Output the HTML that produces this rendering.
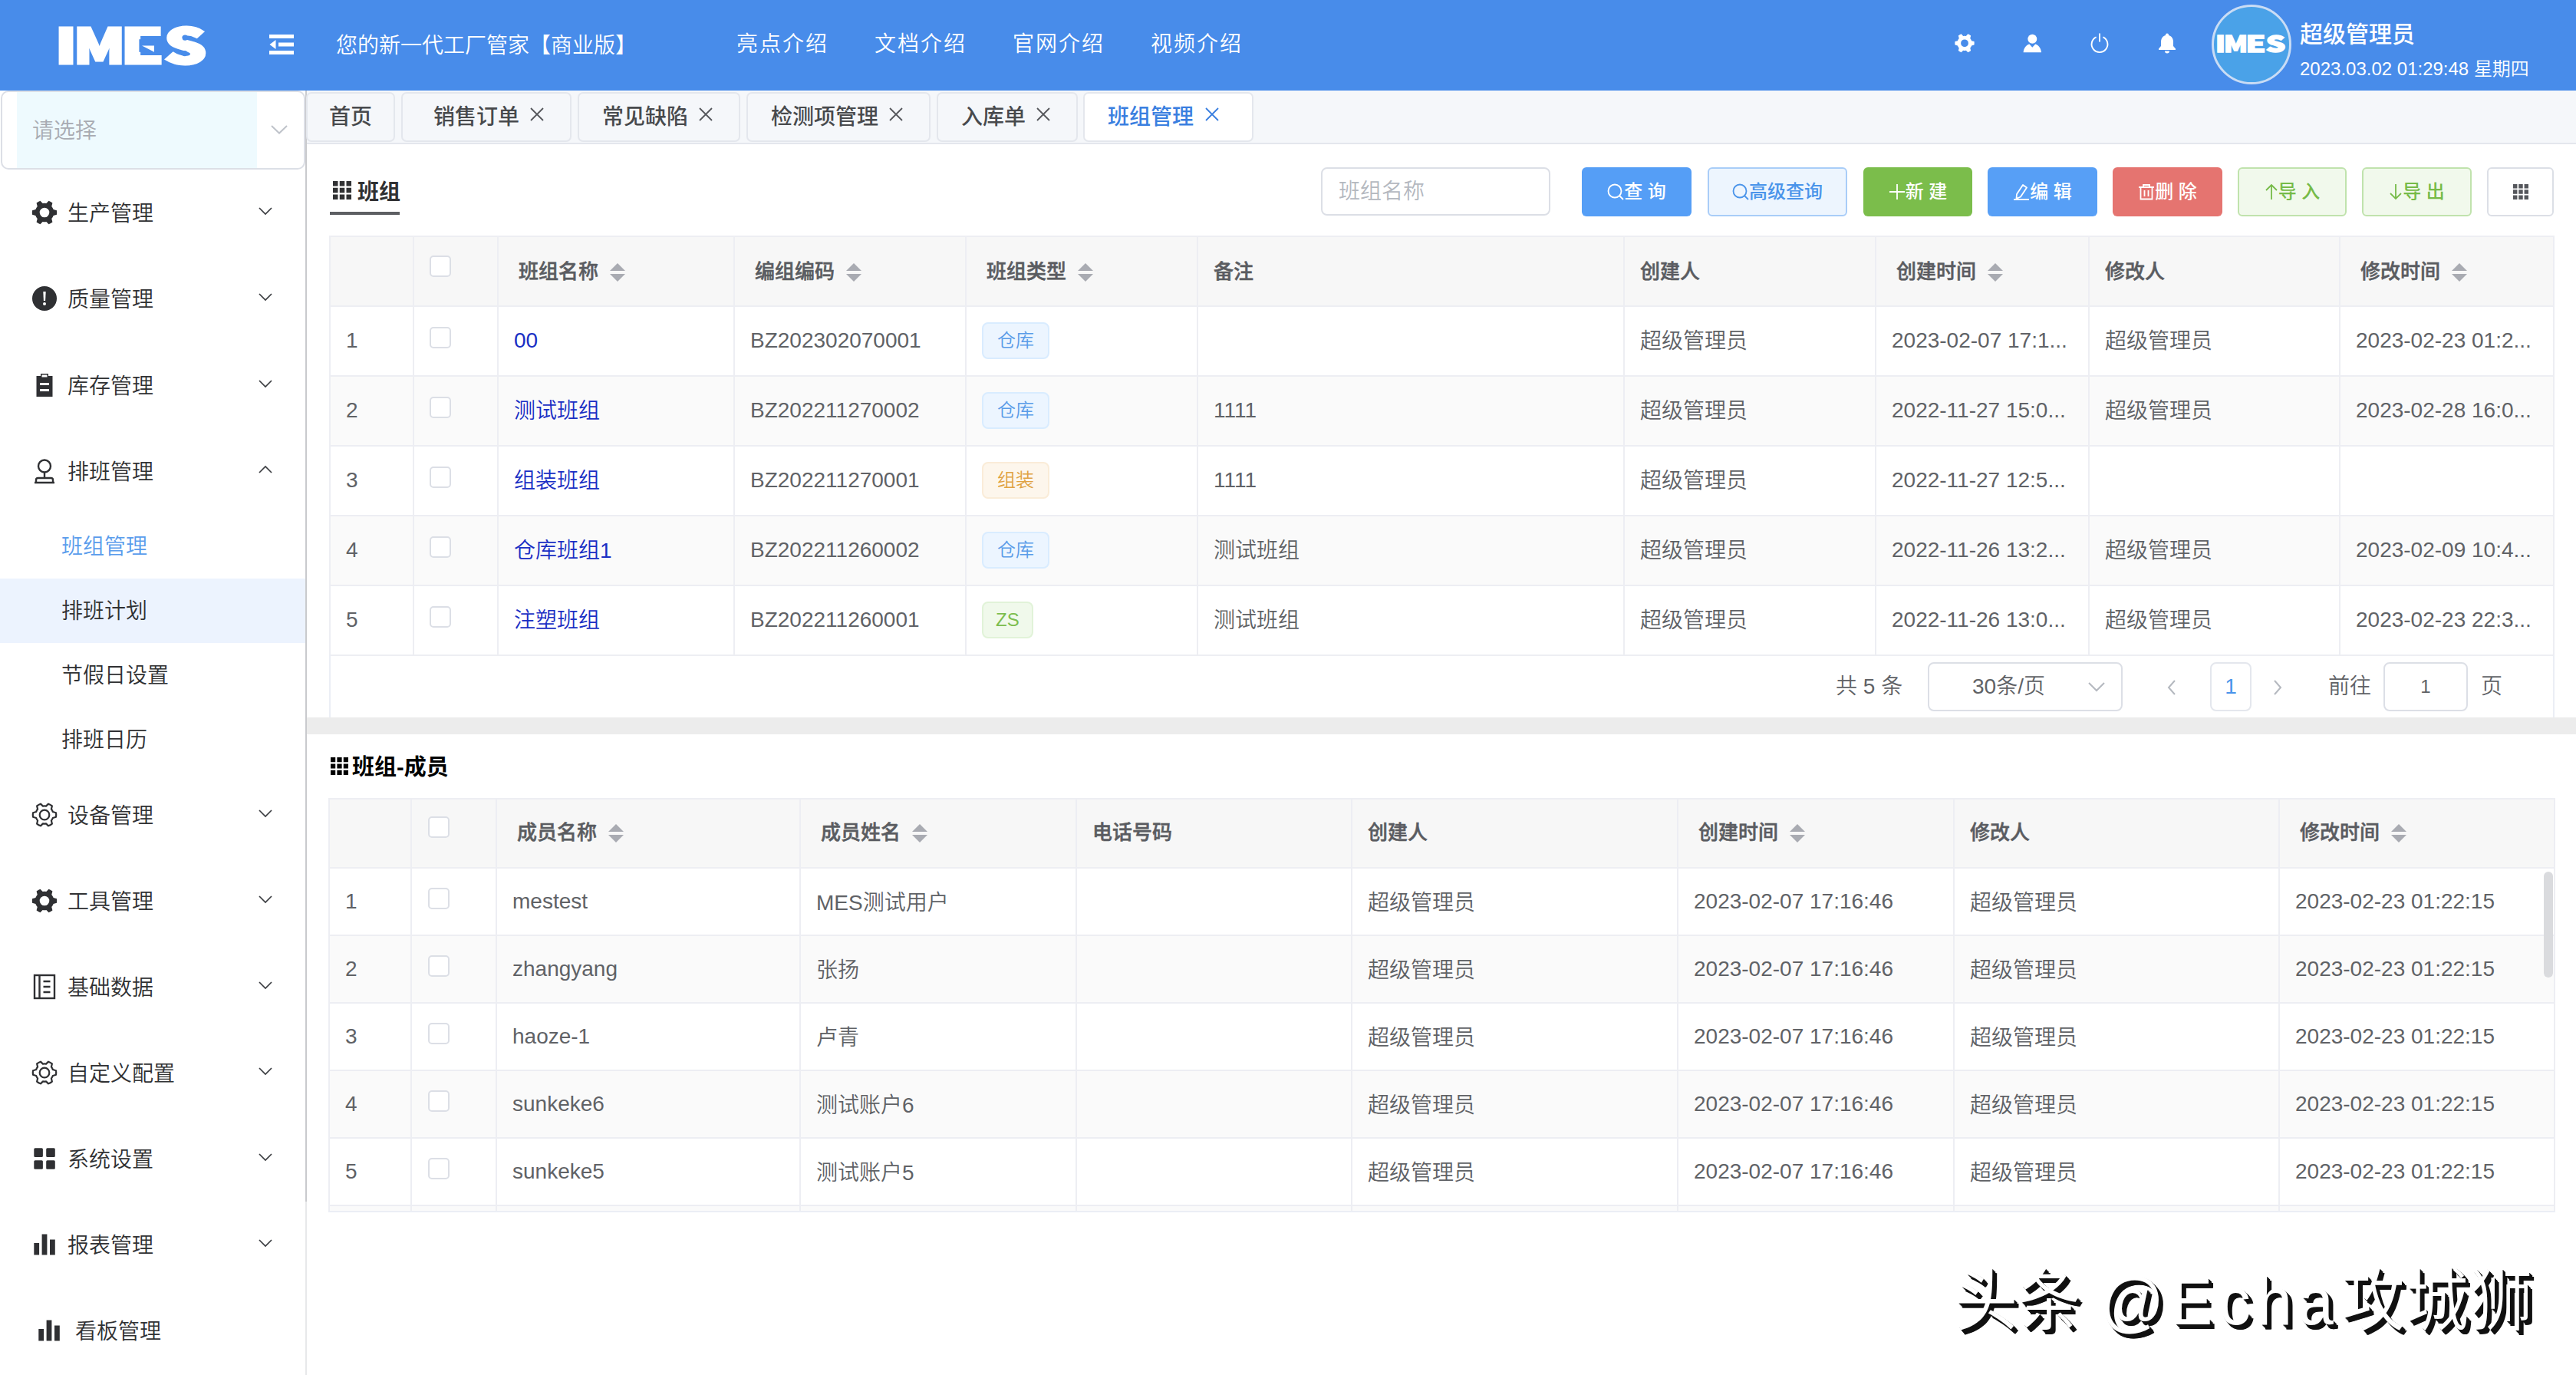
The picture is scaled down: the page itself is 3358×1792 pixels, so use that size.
<!DOCTYPE html>
<html lang="zh-CN">
<head>
<meta charset="utf-8">
<title>IMES 班组管理</title>
<style>
*{box-sizing:border-box;margin:0;padding:0}
html,body{width:3358px;height:1792px;overflow:hidden;background:#fff}
body{font-family:"Liberation Sans","Noto Sans CJK SC",sans-serif;font-size:28px;font-weight:350;color:#606266;position:relative}
.abs{position:absolute}
/* header */
#hdr{position:absolute;left:0;top:0;width:3358px;height:118px;background:#488cea;color:#fff}
#hdr .t{position:absolute;white-space:nowrap;line-height:40px;height:40px}
/* sidebar */
#side{position:absolute;left:0;top:118px;width:398px;height:1674px;background:#fff}
#sel{position:absolute;left:1px;top:0;width:397px;height:103px;border:2px solid #dcdfe6;border-radius:10px;background:#fff}
#sel .in{position:absolute;left:19px;top:0;width:313px;height:99px;background:#eefafe}
#sel .ph{position:absolute;left:39px;top:31px;line-height:40px;color:#a8abb2;font-size:28px}
.mi{position:absolute;left:0;width:398px;height:112px;line-height:112px;color:#303133;font-size:28px}
.mi .tx{position:absolute;left:88px;top:2px}
.mi svg.ic{position:absolute;left:41px;top:39px;width:34px;height:34px}
.mi svg.ar{position:absolute;left:336px;top:47px;width:20px;height:14px}
.si{position:absolute;left:0;width:398px;height:84px;line-height:84px;color:#303133;font-size:28px;padding-left:80px;padding-top:1px}
#sbar{position:absolute;left:398px;top:118px;width:2px;height:1674px;background:linear-gradient(#c9cacd 0,#c9cacd 1448px,#e7e8ea 1448px,#e7e8ea 100%)}
/* tabs */
#tabs{position:absolute;left:400px;top:118px;width:2958px;height:70px;background:#f5f7fa;border-bottom:2px solid #e4e7ed}
.tab{position:absolute;top:2px;height:65px;border:2px solid #e4e7ed;border-radius:7px;background:#f5f7fa;color:#484a4d;font-size:28px;font-weight:500;line-height:61px;white-space:nowrap}
.tab .x{position:absolute;top:17px;width:20px;height:20px}
.tab.on{background:#fff;color:#3a7fe0}
/* main */
#main{position:absolute;left:400px;top:188px;width:2958px;height:1604px;background:#fff}
.btn{position:absolute;top:30px;height:64px;border-radius:6px;font-size:24px;font-weight:500;line-height:64px;text-align:center;color:#fff;white-space:nowrap}
table{position:absolute;border-collapse:collapse;table-layout:fixed}
td,th{border:2px solid #edeef3;text-align:left;font-weight:350;padding:0 0 2px 20px;white-space:nowrap;overflow:hidden;vertical-align:middle}
th{background:#f7f7f7;color:#5a5c61;font-weight:500;font-size:26px;padding-bottom:4px;-webkit-text-stroke:.5px #5a5c61}
td.c{padding-bottom:5px}
th.s{padding-left:26px}
tr.z td{background:#fafafa}
.cb{display:block;width:28px;height:28px;border:2px solid #dcdfe6;border-radius:5px;background:#fff;margin:-8px 0 0 0}
th .cb{margin-top:-10px}
.t2 .cb{margin-left:1px}
.t2 td{padding-bottom:1px}
.t2 th{padding-bottom:7px}
.t2 td.c{padding-bottom:3px}
.tag{display:inline-block;height:48px;line-height:44px;padding:0 18px;border:2px solid;border-radius:8px;font-size:24px;vertical-align:middle}
.tb{background:#ecf5ff;border-color:#d9ecff;color:#5a9ce8}
.to{background:#fdf6ec;border-color:#faecd8;color:#e0a242}
.tg{background:#f0f9eb;border-color:#e1f3d8;color:#7cbd4e}
a.l{color:#1a2fc4;text-decoration:none}
.crt{display:inline-block;position:relative;width:20px;height:28px;vertical-align:middle;margin-left:15px;top:-1px}
.crt:before,.crt:after{content:"";position:absolute;left:0;border:10px solid transparent}
.crt:before{top:-8px;border-bottom-color:#a9abb2}
.crt:after{top:16px;border-top-color:#a9abb2}
</style>
</head>
<body>
<div id="hdr">
<svg class="abs" id="logo" style="left:70px;top:25px" width="210" height="70" viewBox="0 0 210 70" font-family="'Noto Sans CJK SC','Liberation Sans',sans-serif" font-weight="900" font-size="63" fill="#fff" stroke="#fff" stroke-width="3" stroke-linejoin="miter"><text x="1.5" y="57.5" textLength="29" lengthAdjust="spacingAndGlyphs">I</text><text x="25.5" y="57.5" textLength="68" lengthAdjust="spacingAndGlyphs">M</text><text x="87" y="57.5" textLength="57" lengthAdjust="spacingAndGlyphs">E</text><text x="143.5" y="57.5" textLength="56" lengthAdjust="spacingAndGlyphs">S</text><rect x="111.400" y="26.200" width="30" height="16.600" fill="#488cea" stroke="none"/><path d="M115 34.500h16v8.300z" fill="#fff" stroke="none"/><circle cx="171.200" cy="24.200" r="3.600" fill="#488cea" stroke="none"/><circle cx="170.800" cy="44.600" r="3.600" fill="#488cea" stroke="none"/></svg>
<svg class="abs" style="left:350px;top:44px" width="34" height="28" viewBox="0 0 34 28"><path d="M1 1h32v5H1zM13 11.5h20v5H13zM1 22h32v5H1zM1.5 14l8-6v12z" fill="#fff"/></svg>
<div class="t" style="left:438px;top:40px;font-size:28px">您的新一代工厂管家【商业版】</div>
<div class="t" style="left:960px;top:38px;letter-spacing:2px">亮点介绍</div>
<div class="t" style="left:1140px;top:38px;letter-spacing:2px">文档介绍</div>
<div class="t" style="left:1320px;top:38px;letter-spacing:2px">官网介绍</div>
<div class="t" style="left:1500px;top:38px;letter-spacing:2px">视频介绍</div>
<svg class="abs" style="left:2547px;top:42px" width="28" height="28" viewBox="0 0 28 28"><path id="gearp" d="M23.08 11.17L26.51 12.09A12.70 12.70 0 0 1 26.51 16.51L23.08 17.43A9.60 9.60 0 0 1 21.25 20.60L22.16 24.03A12.70 12.70 0 0 1 18.34 26.23L15.83 23.72A9.60 9.60 0 0 1 12.17 23.72L9.66 26.23A12.70 12.70 0 0 1 5.84 24.03L6.75 20.60A9.60 9.60 0 0 1 4.92 17.43L1.49 16.51A12.70 12.70 0 0 1 1.49 12.09L4.92 11.17A9.60 9.60 0 0 1 6.75 8.00L5.84 4.57A12.70 12.70 0 0 1 9.66 2.37L12.17 4.88A9.60 9.60 0 0 1 15.83 4.88L18.34 2.37A12.70 12.70 0 0 1 22.16 4.57L21.25 8.00A9.60 9.60 0 0 1 23.08 11.17ZM9.10 14.30a4.90 4.90 0 1 0 9.80 0a4.90 4.90 0 1 0 -9.80 0z" fill="#fff" fill-rule="evenodd"/></svg>
<svg class="abs" style="left:2636px;top:43px" width="26" height="26" viewBox="0 0 26 26"><circle cx="13.300" cy="7.700" r="6" fill="#fff"/><path d="M1.600 25.200c.6-6 4-9.300 7.800-10.600l3.900 4.200 3.900-4.200c3.800 1.300 7.200 4.600 7.800 10.600z" fill="#fff"/></svg>
<svg class="abs" style="left:2724px;top:42px" width="26" height="28" viewBox="0 0 26 28"><path d="M8.600 6.300a10.400 10.400 0 1 0 8.800 0" fill="none" stroke="#fff" stroke-width="1.900"/><path d="M13 1.500v11" stroke="#fff" stroke-width="1.900"/></svg>
<svg class="abs" style="left:2812px;top:42px" width="26" height="28" viewBox="0 0 26 28"><path d="M13 1.500c1.200 0 2 .8 2 2v.6c4 1 6 4.500 6 8.500v5.500l3 3.500v1.500H2v-1.500l3-3.500v-5.500c0-4 2-7.500 6-8.500v-.6c0-1.200.8-2 2-2zM10 24.500h6a3 3 0 0 1-6 0z" fill="#fff"/></svg>
<div class="abs" style="left:2883px;top:6px;width:104px;height:104px;border-radius:52px;background:#4aa2e8;border:3px solid #c9dcf5"></div>
<svg class="abs" id="logo2" style="left:2886.800px;top:40.800px" width="97.340" height="32.450" viewBox="0 0 210 70" font-family="'Noto Sans CJK SC','Liberation Sans',sans-serif" font-weight="900" font-size="63" fill="#fff" stroke="#fff" stroke-width="3" stroke-linejoin="miter"><text x="1.5" y="57.5" textLength="29" lengthAdjust="spacingAndGlyphs">I</text><text x="25.5" y="57.5" textLength="68" lengthAdjust="spacingAndGlyphs">M</text><text x="87" y="57.5" textLength="57" lengthAdjust="spacingAndGlyphs">E</text><text x="143.5" y="57.5" textLength="56" lengthAdjust="spacingAndGlyphs">S</text></svg>
<div class="t" style="left:2998px;top:25px;font-size:30px;font-weight:500">超级管理员</div>
<div class="t" style="left:2998px;top:70px;font-size:24px">2023.03.02 01:29:48 星期四</div>
</div>
<div id="side">
<div id="sel"><div class="in"></div><div class="ph">请选择</div><svg class="abs" style="left:349px;top:42px" width="24" height="16" viewBox="0 0 24 16"><path d="M2 2l10 9.500 10-9.500" fill="none" stroke="#bfc3ca" stroke-width="2"/></svg></div>
<div class="mi" style="top:103px"><svg class="ic" viewBox="0 0 34 34"><path d="M28.63 13.00L32.95 14.19A16.20 16.20 0 0 1 32.95 19.81L28.63 21.00A12.30 12.30 0 0 1 26.28 25.07L27.41 29.41A16.20 16.20 0 0 1 22.54 32.22L19.35 29.07A12.30 12.30 0 0 1 14.65 29.07L11.46 32.22A16.20 16.20 0 0 1 6.59 29.41L7.72 25.07A12.30 12.30 0 0 1 5.37 21.00L1.05 19.81A16.20 16.20 0 0 1 1.05 14.19L5.37 13.00A12.30 12.30 0 0 1 7.72 8.93L6.59 4.59A16.20 16.20 0 0 1 11.46 1.78L14.65 4.93A12.30 12.30 0 0 1 19.35 4.93L22.54 1.78A16.20 16.20 0 0 1 27.41 4.59L26.28 8.93A12.30 12.30 0 0 1 28.63 13.00ZM10.70 17.00a6.30 6.30 0 1 0 12.60 0a6.30 6.30 0 1 0 -12.60 0z" fill="#2f3033" fill-rule="evenodd"/></svg><span class="tx">生产管理</span><svg class="ar" viewBox="0 0 20 14"><path d="M2 3l8 8 8-8" fill="none" stroke="#3a3c40" stroke-width="1.700"/></svg></div>
<div class="mi" style="top:215px"><svg class="ic" viewBox="0 0 34 34"><circle cx="17" cy="17" r="16" fill="#2f3033"/><path d="M15.300 8h3.400l-.6 12h-2.200z" fill="#fff"/><circle cx="17" cy="24" r="2" fill="#fff"/></svg><span class="tx">质量管理</span><svg class="ar" viewBox="0 0 20 14"><path d="M2 3l8 8 8-8" fill="none" stroke="#3a3c40" stroke-width="1.700"/></svg></div>
<div class="mi" style="top:328px"><svg class="ic" viewBox="0 0 34 34"><path d="M12 2h10v3h5.500v27h-21V5H12zM11 14v3h12v-3zM11 22v3h12v-3zM13.500 3.500v3h7v-3z" fill="#2f3033" fill-rule="evenodd"/></svg><span class="tx">库存管理</span><svg class="ar" viewBox="0 0 20 14"><path d="M2 3l8 8 8-8" fill="none" stroke="#3a3c40" stroke-width="1.700"/></svg></div>
<div class="mi" style="top:440px"><svg class="ic" viewBox="0 0 34 34"><circle cx="17" cy="10.500" r="8" fill="none" stroke="#2f3033" stroke-width="2.400"/><path d="M17 18.500v7M6 32v-3.500c0-1.500 1-2.500 2.500-2.500h17c1.500 0 2.500 1 2.500 2.500V32M4 32h26" fill="none" stroke="#2f3033" stroke-width="2.400"/></svg><span class="tx">排班管理</span><svg class="ar" viewBox="0 0 20 14"><path d="M2 11l8-8 8 8" fill="none" stroke="#3a3c40" stroke-width="1.700"/></svg></div>
<div class="si" style="top:552px;color:#5a9cec">班组管理</div>
<div class="si" style="top:636px;background:#ecf3fe">排班计划</div>
<div class="si" style="top:720px;">节假日设置</div>
<div class="si" style="top:804px;">排班日历</div>
<div class="mi" style="top:888px"><svg class="ic" viewBox="0 0 34 34"><path d="M27.90 13.03L31.95 14.23A15.20 15.20 0 0 1 31.95 19.77L27.90 20.97A11.60 11.60 0 0 1 25.89 24.46L26.87 28.56A15.20 15.20 0 0 1 22.07 31.33L19.01 28.42A11.60 11.60 0 0 1 14.99 28.42L11.93 31.33A15.20 15.20 0 0 1 7.13 28.56L8.11 24.46A11.60 11.60 0 0 1 6.10 20.97L2.05 19.77A15.20 15.20 0 0 1 2.05 14.23L6.10 13.03A11.60 11.60 0 0 1 8.11 9.54L7.13 5.44A15.20 15.20 0 0 1 11.93 2.67L14.99 5.58A11.60 11.60 0 0 1 19.01 5.58L22.07 2.67A15.20 15.20 0 0 1 26.87 5.44L25.89 9.54A11.60 11.60 0 0 1 27.90 13.03Z" fill="none" stroke="#2f3033" stroke-width="2.200" stroke-linejoin="round"/><circle cx="17" cy="17" r="6.300" fill="none" stroke="#2f3033" stroke-width="2.200"/></svg><span class="tx">设备管理</span><svg class="ar" viewBox="0 0 20 14"><path d="M2 3l8 8 8-8" fill="none" stroke="#3a3c40" stroke-width="1.700"/></svg></div>
<div class="mi" style="top:1000px"><svg class="ic" viewBox="0 0 34 34"><path d="M28.63 13.00L32.95 14.19A16.20 16.20 0 0 1 32.95 19.81L28.63 21.00A12.30 12.30 0 0 1 26.28 25.07L27.41 29.41A16.20 16.20 0 0 1 22.54 32.22L19.35 29.07A12.30 12.30 0 0 1 14.65 29.07L11.46 32.22A16.20 16.20 0 0 1 6.59 29.41L7.72 25.07A12.30 12.30 0 0 1 5.37 21.00L1.05 19.81A16.20 16.20 0 0 1 1.05 14.19L5.37 13.00A12.30 12.30 0 0 1 7.72 8.93L6.59 4.59A16.20 16.20 0 0 1 11.46 1.78L14.65 4.93A12.30 12.30 0 0 1 19.35 4.93L22.54 1.78A16.20 16.20 0 0 1 27.41 4.59L26.28 8.93A12.30 12.30 0 0 1 28.63 13.00ZM10.70 17.00a6.30 6.30 0 1 0 12.60 0a6.30 6.30 0 1 0 -12.60 0z" fill="#2f3033" fill-rule="evenodd"/></svg><span class="tx">工具管理</span><svg class="ar" viewBox="0 0 20 14"><path d="M2 3l8 8 8-8" fill="none" stroke="#3a3c40" stroke-width="1.700"/></svg></div>
<div class="mi" style="top:1112px"><svg class="ic" viewBox="0 0 34 34"><rect x="4" y="2" width="26" height="30" fill="none" stroke="#2f3033" stroke-width="2.400"/><path d="M10.500 2v30M15.500 10h9M15.500 17h9M15.500 24h9" fill="none" stroke="#2f3033" stroke-width="2.400"/></svg><span class="tx">基础数据</span><svg class="ar" viewBox="0 0 20 14"><path d="M2 3l8 8 8-8" fill="none" stroke="#3a3c40" stroke-width="1.700"/></svg></div>
<div class="mi" style="top:1224px"><svg class="ic" viewBox="0 0 34 34"><path d="M27.90 13.03L31.95 14.23A15.20 15.20 0 0 1 31.95 19.77L27.90 20.97A11.60 11.60 0 0 1 25.89 24.46L26.87 28.56A15.20 15.20 0 0 1 22.07 31.33L19.01 28.42A11.60 11.60 0 0 1 14.99 28.42L11.93 31.33A15.20 15.20 0 0 1 7.13 28.56L8.11 24.46A11.60 11.60 0 0 1 6.10 20.97L2.05 19.77A15.20 15.20 0 0 1 2.05 14.23L6.10 13.03A11.60 11.60 0 0 1 8.11 9.54L7.13 5.44A15.20 15.20 0 0 1 11.93 2.67L14.99 5.58A11.60 11.60 0 0 1 19.01 5.58L22.07 2.67A15.20 15.20 0 0 1 26.87 5.44L25.89 9.54A11.60 11.60 0 0 1 27.90 13.03Z" fill="none" stroke="#2f3033" stroke-width="2.200" stroke-linejoin="round"/><circle cx="17" cy="17" r="6.300" fill="none" stroke="#2f3033" stroke-width="2.200"/></svg><span class="tx">自定义配置</span><svg class="ar" viewBox="0 0 20 14"><path d="M2 3l8 8 8-8" fill="none" stroke="#3a3c40" stroke-width="1.700"/></svg></div>
<div class="mi" style="top:1336px"><svg class="ic" viewBox="0 0 34 34"><g fill="#2f3033"><rect x="3.300" y="3.300" width="11.600" height="11.600" rx="1.500"/><rect x="19.200" y="3.300" width="11.600" height="11.600" rx="1.500"/><rect x="3.300" y="19.200" width="11.600" height="11.600" rx="1.500"/><rect x="19.200" y="19.200" width="11.600" height="11.600" rx="1.500"/></g></svg><span class="tx">系统设置</span><svg class="ar" viewBox="0 0 20 14"><path d="M2 3l8 8 8-8" fill="none" stroke="#3a3c40" stroke-width="1.700"/></svg></div>
<div class="mi" style="top:1448px"><svg class="ic" viewBox="0 0 34 34"><path d="M3.300 15h6.800v15.500H3.300zM13.600 3.500h6.800v27h-6.800zM24 10.500h6.800v20H24z" fill="#2f3033"/></svg><span class="tx">报表管理</span><svg class="ar" viewBox="0 0 20 14"><path d="M2 3l8 8 8-8" fill="none" stroke="#3a3c40" stroke-width="1.700"/></svg></div>
<div class="mi" style="top:1560px"><svg class="ic" style="left:47px" viewBox="0 0 34 34"><path d="M3.300 15h6.800v15.500H3.300zM13.600 3.500h6.800v27h-6.800zM24 10.500h6.800v20H24z" fill="#2f3033"/></svg><span class="tx" style="left:98px">看板管理</span></div>
</div>
<div id="sbar"></div>
<div id="tabs">
<div class="tab" style="left:-1px;width:116px;padding-left:28px">首页</div>
<div class="tab" style="left:123px;width:222px;padding-left:40px">销售订单<svg class="x" style="left:165px" viewBox="0 0 20 20"><path d="M2 2l16 16M18 2L2 18" fill="none" stroke="#55575c" stroke-width="1.800"/></svg></div>
<div class="tab" style="left:353px;width:212px;padding-left:30px">常见缺陷<svg class="x" style="left:155px" viewBox="0 0 20 20"><path d="M2 2l16 16M18 2L2 18" fill="none" stroke="#55575c" stroke-width="1.800"/></svg></div>
<div class="tab" style="left:573px;width:240px;padding-left:30px">检测项管理<svg class="x" style="left:183px" viewBox="0 0 20 20"><path d="M2 2l16 16M18 2L2 18" fill="none" stroke="#55575c" stroke-width="1.800"/></svg></div>
<div class="tab" style="left:821px;width:184px;padding-left:30px">入库单<svg class="x" style="left:127px" viewBox="0 0 20 20"><path d="M2 2l16 16M18 2L2 18" fill="none" stroke="#55575c" stroke-width="1.800"/></svg></div>
<div class="tab on" style="left:1012px;width:222px;padding-left:30px">班组管理<svg class="x" style="left:156px" viewBox="0 0 20 20"><path d="M2 2l16 16M18 2L2 18" fill="none" stroke="#3a7fe0" stroke-width="1.800"/></svg></div>
</div>
<div id="main">
<svg class="abs" style="left:34px;top:48px" width="24" height="24" viewBox="0 0 24 24"><path d="M0 0h6.500v6.500H0zM8.750 0h6.500v6.500h-6.500zM17.500 0H24v6.500h-6.500zM0 8.750h6.500v6.500H0zM8.750 8.750h6.500v6.500h-6.500zM17.500 8.750H24v6.500h-6.500zM0 17.500h6.500V24H0zM8.750 17.500h6.500V24h-6.500zM17.500 17.500H24V24h-6.500z" fill="#303133"/></svg><div class="abs" style="left:66px;top:43px;line-height:40px;font-weight:700;color:#303133;font-size:28px">班组</div>
<div class="abs" style="left:30px;top:88px;width:91px;height:4px;background:#5d5f63"></div>
<div class="abs" style="left:1322px;top:30px;width:299px;height:63px;border:2px solid #dcdfe6;border-radius:8px;line-height:59px;padding-left:21px;color:#b4b8bf;font-size:28px">班组名称</div>
<div class="btn" style="left:1662px;width:143px;background:#559ef6"><svg width="22" height="22" viewBox="0 0 22 22" style="vertical-align:-3px"><circle cx="10" cy="10" r="8.500" fill="none" stroke="currentColor" stroke-width="1.800"/><path d="M16 16l5 5" stroke="currentColor" stroke-width="1.800"/></svg>查 询</div>
<div class="btn" style="left:1826px;width:182px;background:#edf5fe;border:2px solid #a9cdf8;color:#4a94ea;line-height:60px"><svg width="22" height="22" viewBox="0 0 22 22" style="vertical-align:-3px"><circle cx="10" cy="10" r="8.500" fill="none" stroke="currentColor" stroke-width="1.800"/><path d="M16 16l5 5" stroke="currentColor" stroke-width="1.800"/></svg>高级查询</div>
<div class="btn" style="left:2029px;width:142px;background:#7bbd4b"><svg width="22" height="22" viewBox="0 0 22 22" style="vertical-align:-3px"><path d="M11 1v20M1 11h20" stroke="currentColor" stroke-width="1.800"/></svg>新 建</div>
<div class="btn" style="left:2191px;width:143px;background:#579ff6"><svg width="22" height="22" viewBox="0 0 22 22" style="vertical-align:-3px"><path d="M13 2l5 3.500-8 12-5.500 2.500.5-6zM1 21h20" fill="none" stroke="currentColor" stroke-width="1.800" stroke-linejoin="round"/></svg>编 辑</div>
<div class="btn" style="left:2354px;width:143px;background:#e57470"><svg width="22" height="22" viewBox="0 0 22 22" style="vertical-align:-3px"><path d="M1 5h20M7 5V2h8v3M3.500 5v15.500h15V5M8.500 9v8M13.500 9v8" fill="none" stroke="currentColor" stroke-width="1.800"/></svg>删 除</div>
<div class="btn" style="left:2517px;width:142px;background:#f1f9ec;border:2px solid #c0e3ad;color:#76bb48;line-height:60px"><svg width="18" height="22" viewBox="0 0 18 22" style="vertical-align:-3px"><path d="M9 21V2M2 9l7-7 7 7" fill="none" stroke="currentColor" stroke-width="1.800"/></svg>导 入</div>
<div class="btn" style="left:2679px;width:143px;background:#f1f9ec;border:2px solid #c0e3ad;color:#76bb48;line-height:60px"><svg width="18" height="22" viewBox="0 0 18 22" style="vertical-align:-3px"><path d="M9 1v19M2 13l7 7 7-7" fill="none" stroke="currentColor" stroke-width="1.800"/></svg>导 出</div>
<div class="btn" style="left:2842px;width:87px;background:#fff;border:2px solid #dcdfe6"></div>
<svg class="abs" style="left:2876px;top:52px" width="20" height="20" viewBox="0 0 24 24"><path d="M0 0h6.500v6.500H0zM8.750 0h6.500v6.500h-6.500zM17.500 0H24v6.500h-6.500zM0 8.750h6.500v6.500H0zM8.750 8.750h6.500v6.500h-6.500zM17.500 8.750H24v6.500h-6.500zM0 17.500h6.500V24H0zM8.750 17.500h6.500V24h-6.500zM17.500 17.500H24V24h-6.500z" fill="#55575c"/></svg><table style="left:29px;top:119px;width:2899px"><colgroup><col style="width:109px"><col style="width:110px"><col style="width:308px"><col style="width:302px"><col style="width:302px"><col style="width:556px"><col style="width:328px"><col style="width:278px"><col style="width:327px"><col style="width:279px"></colgroup>
<tr style="height:91px"><th></th><th><i class="cb"></i></th><th class="s">班组名称<i class="crt"></i></th><th class="s">编组编码<i class="crt"></i></th><th class="s">班组类型<i class="crt"></i></th><th>备注</th><th>创建人</th><th class="s">创建时间<i class="crt"></i></th><th>修改人</th><th class="s">修改时间<i class="crt"></i></th></tr>
<tr style="height:91px"><td>1</td><td><i class="cb"></i></td><td><a class="l">00</a></td><td>BZ202302070001</td><td><span class="tag tb">仓库</span></td><td></td><td class="c">超级管理员</td><td>2023-02-07 17:1...</td><td class="c">超级管理员</td><td>2023-02-23 01:2...</td></tr>
<tr style="height:91px" class="z"><td>2</td><td><i class="cb"></i></td><td class="c"><a class="l">测试班组</a></td><td>BZ202211270002</td><td><span class="tag tb">仓库</span></td><td>1111</td><td class="c">超级管理员</td><td>2022-11-27 15:0...</td><td class="c">超级管理员</td><td>2023-02-28 16:0...</td></tr>
<tr style="height:91px"><td>3</td><td><i class="cb"></i></td><td class="c"><a class="l">组装班组</a></td><td>BZ202211270001</td><td><span class="tag to">组装</span></td><td>1111</td><td class="c">超级管理员</td><td>2022-11-27 12:5...</td><td></td><td></td></tr>
<tr style="height:91px" class="z"><td>4</td><td><i class="cb"></i></td><td class="c"><a class="l">仓库班组1</a></td><td>BZ202211260002</td><td><span class="tag tb">仓库</span></td><td class="c">测试班组</td><td class="c">超级管理员</td><td>2022-11-26 13:2...</td><td class="c">超级管理员</td><td>2023-02-09 10:4...</td></tr>
<tr style="height:91px"><td>5</td><td><i class="cb"></i></td><td class="c"><a class="l">注塑班组</a></td><td>BZ202211260001</td><td><span class="tag tg" style="padding:0 16px">ZS</span></td><td class="c">测试班组</td><td class="c">超级管理员</td><td>2022-11-26 13:0...</td><td class="c">超级管理员</td><td>2023-02-23 22:3...</td></tr>
</table>
<div class="abs" style="left:29px;top:666px;width:2px;height:82px;background:#ebeef5"></div><div class="abs" style="left:2928px;top:666px;width:2px;height:82px;background:#ebeef5"></div>
<div class="abs" style="left:0;top:747px;width:2958px;height:22px;background:#ececec"></div>
<div class="abs pg" style="left:1993px;top:687px;line-height:40px;font-size:28px">共 5 条</div><div class="abs" style="left:2113px;top:675px;width:254px;height:64px;border:2px solid #dcdfe6;border-radius:8px;line-height:60px;font-size:28px;padding-left:56px">30条/页<svg class="abs" style="left:206px;top:22px" width="24" height="16" viewBox="0 0 24 16"><path d="M2 3l10 10 10-10" fill="none" stroke="#b4b8bf" stroke-width="2"/></svg></div><svg class="abs" style="left:2424px;top:697px" width="14" height="22" viewBox="0 0 14 22"><path d="M11 2L3 11l8 9" fill="none" stroke="#b4b8bf" stroke-width="2"/></svg><div class="abs" style="left:2481px;top:675px;width:54px;height:64px;border:2px solid #e4e7ed;border-radius:8px;line-height:60px;font-size:28px;text-align:center;color:#4a94ea">1</div><svg class="abs" style="left:2562px;top:697px" width="14" height="22" viewBox="0 0 14 22"><path d="M3 2l8 9-8 9" fill="none" stroke="#b4b8bf" stroke-width="2"/></svg><div class="abs" style="left:2635px;top:687px;line-height:40px;font-size:28px">前往</div><div class="abs" style="left:2707px;top:675px;width:110px;height:64px;border:2px solid #dcdfe6;border-radius:8px;line-height:60px;font-size:24px;text-align:center">1</div><div class="abs" style="left:2834px;top:687px;line-height:40px;font-size:28px">页</div>
<svg class="abs" style="left:31px;top:799px" width="23" height="23" viewBox="0 0 24 24"><path d="M0 0h6.500v6.500H0zM8.750 0h6.500v6.500h-6.500zM17.500 0H24v6.500h-6.500zM0 8.750h6.500v6.500H0zM8.750 8.750h6.500v6.500h-6.500zM17.500 8.750H24v6.500h-6.500zM0 17.500h6.500V24H0zM8.750 17.500h6.500V24h-6.500zM17.500 17.500H24V24h-6.500z" fill="#000"/></svg><div class="abs" style="left:59px;top:791px;line-height:40px;font-weight:700;color:#000;font-size:29px;margin-top:1px">班组-成员</div>
<div class="abs" style="left:0;top:0;width:2958px;height:1392px;overflow:hidden"><table class="t2" style="left:28px;top:852px;width:2901px"><colgroup><col style="width:107px"><col style="width:111px"><col style="width:396px"><col style="width:360px"><col style="width:359px"><col style="width:425px"><col style="width:360px"><col style="width:424px"><col style="width:359px"></colgroup>
<tr style="height:90px"><th></th><th><i class="cb"></i></th><th class="s">成员名称<i class="crt"></i></th><th class="s">成员姓名<i class="crt"></i></th><th>电话号码</th><th>创建人</th><th class="s">创建时间<i class="crt"></i></th><th>修改人</th><th class="s">修改时间<i class="crt"></i></th></tr>
<tr style="height:88px"><td>1</td><td><i class="cb"></i></td><td>mestest</td><td class="c">MES测试用户</td><td></td><td class="c">超级管理员</td><td>2023-02-07 17:16:46</td><td class="c">超级管理员</td><td>2023-02-23 01:22:15</td></tr>
<tr style="height:88px" class="z"><td>2</td><td><i class="cb"></i></td><td>zhangyang</td><td class="c">张扬</td><td></td><td class="c">超级管理员</td><td>2023-02-07 17:16:46</td><td class="c">超级管理员</td><td>2023-02-23 01:22:15</td></tr>
<tr style="height:88px"><td>3</td><td><i class="cb"></i></td><td>haoze-1</td><td class="c">卢青</td><td></td><td class="c">超级管理员</td><td>2023-02-07 17:16:46</td><td class="c">超级管理员</td><td>2023-02-23 01:22:15</td></tr>
<tr style="height:88px" class="z"><td>4</td><td><i class="cb"></i></td><td>sunkeke6</td><td class="c">测试账户6</td><td></td><td class="c">超级管理员</td><td>2023-02-07 17:16:46</td><td class="c">超级管理员</td><td>2023-02-23 01:22:15</td></tr>
<tr style="height:88px"><td>5</td><td><i class="cb"></i></td><td>sunkeke5</td><td class="c">测试账户5</td><td></td><td class="c">超级管理员</td><td>2023-02-07 17:16:46</td><td class="c">超级管理员</td><td>2023-02-23 01:22:15</td></tr>
<tr style="height:88px" class="z"><td></td><td></td><td></td><td></td><td></td><td></td><td></td><td></td><td></td></tr>
</table>
</div>
<div class="abs" style="left:28px;top:1390px;width:2903px;height:2px;background:#ebeef5"></div>
<div class="abs" style="left:2916px;top:948px;width:12px;height:138px;border-radius:6px;background:#dadbde"></div>
<div class="abs" id="wm" style="left:2148px;top:1444px;font-size:82px;line-height:120px;white-space:nowrap;color:#fff;text-shadow:1px 1px 0 #111,2px 2px 0 #111,3px 3px 0 #111,4px 4px 0 #111,5px 5px 0 #111,6px 5px 0 #111;transform:scale(1,1.070);transform-origin:0 0">头条 <span style="letter-spacing:8.500px;margin-left:3px">@Echa</span><span style="letter-spacing:1.500px;margin-left:2px">攻城狮</span></div>
</div>
</body>
</html>
